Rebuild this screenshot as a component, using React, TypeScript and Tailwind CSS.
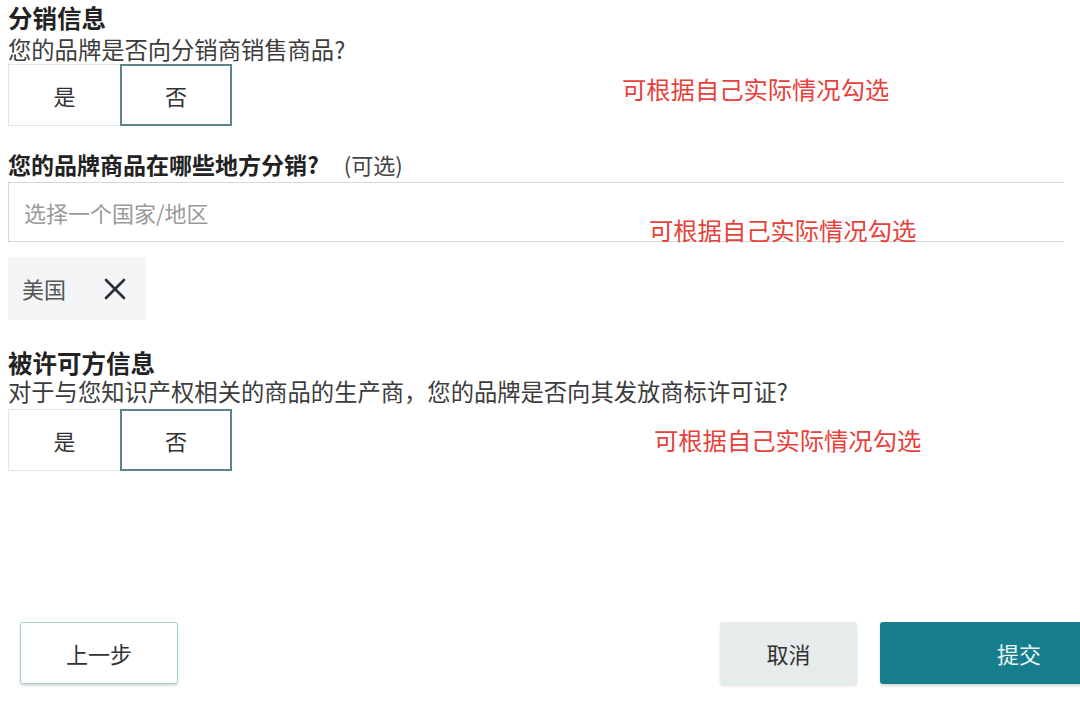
import React, { useState } from 'react';

const Note: React.FC<{ className?: string }> = ({ className = '' }) => (
  <span className={`text-[24.3px] leading-[24px] text-[#e8403a] whitespace-nowrap ${className}`}>
    可根据自己实际情况勾选
  </span>
);

const YesNo: React.FC<{ value: boolean; onChange: (v: boolean) => void }> = ({ value, onChange }) => (
  <div className="flex h-[62px] shrink-0">
    <button
      type="button"
      onClick={() => onChange(true)}
      className={`w-[112px] h-full text-[22px] text-[#333] ${
        value ? 'border-2 border-[#5b858a]' : 'border border-r-0 border-[#e3e3e3]'
      }`}
    >
      是
    </button>
    <button
      type="button"
      onClick={() => onChange(false)}
      className={`w-[112px] h-full text-[22px] text-[#333] ${
        !value ? 'border-2 border-[#5b858a]' : 'border border-l-0 border-[#e3e3e3]'
      }`}
    >
      否
    </button>
  </div>
);

const App: React.FC = () => {
  const [distributes, setDistributes] = useState(false);
  const [licenses, setLicenses] = useState(false);
  const [regions, setRegions] = useState<string[]>(['美国']);

  return (
    <div
      className="w-[1080px] h-[709px] overflow-hidden bg-white flex flex-col"
      style={{ fontFamily: '"Noto Sans CJK SC", "Noto Sans", sans-serif' }}
    >
      <div className="pl-[8px] pt-[3px] flex flex-col">
        {/* 分销信息 */}
        <h2 className="text-[24.5px] leading-[30px] font-bold text-[#222]">分销信息</h2>
        <p className="mt-[1px] text-[23.3px] leading-[30px] text-[#3c3c3c]">您的品牌是否向分销商销售商品?</p>
        <div className="flex">
          <YesNo value={distributes} onChange={setDistributes} />
          <Note className="ml-[390px] mt-[13px]" />
        </div>

        <div className="mt-[22px] flex items-baseline">
          <h3 className="text-[23px] leading-[30px] font-bold text-[#222]">您的品牌商品在哪些地方分销?</h3>
          <span className="ml-[25px] text-[22px] text-[#444]">(可选)</span>
        </div>
        <div className="relative mt-[1px] w-[1056px] h-[60px] border-y border-l border-[#d6d6d6] flex items-center pl-[15px]">
          <input
            type="text"
            placeholder="选择一个国家/地区"
            className="w-full bg-transparent text-[22px] text-[#333] placeholder:text-[#9a9a9a] focus:outline-none"
          />
          <Note className="absolute left-[640px] top-[35px]" />
        </div>

        <div className="mt-[15px] flex">
          {regions.map((r) => (
            <div key={r} className="h-[63px] w-[138px] bg-[#f3f5f6] flex items-center pl-[14px]">
              <span className="text-[22px] text-[#555]">{r}</span>
              <button
                type="button"
                onClick={() => setRegions(regions.filter((x) => x !== r))}
                className="ml-[38px] text-[#2b2f33]"
              >
                <svg width="22" height="22" viewBox="0 0 22 22" fill="none" stroke="currentColor" strokeWidth="2.6" strokeLinecap="round">
                  <path d="M2 2 20 20M20 2 2 20" />
                </svg>
              </button>
            </div>
          ))}
        </div>

        {/* 被许可方信息 */}
        <h2 className="mt-[28px] text-[24.5px] leading-[29px] font-bold text-[#222]">被许可方信息</h2>
        <p className="text-[23.3px] leading-[29px] text-[#3c3c3c]">
          对于与您知识产权相关的商品的生产商，您的品牌是否向其发放商标许可证?
        </p>
        <div className="mt-[3px] flex items-center">
          <YesNo value={licenses} onChange={setLicenses} />
          <Note className="ml-[422px]" />
        </div>
      </div>

      <div className="mt-auto mb-[25px] w-[1158px] flex pl-[20px]">
        <button
          type="button"
          className="w-[158px] h-[62px] rounded-[3px] border-[1.5px] border-[#a3cfcf] bg-white text-[22px] text-[#333] shadow-[0_2px_3px_rgba(0,0,0,0.15)]"
        >
          上一步
        </button>
        <div className="flex-1" />
        <button
          type="button"
          className="w-[137px] h-[62px] rounded-[3px] bg-[#e6ebec] text-[22px] text-[#333] shadow-[0_2px_3px_rgba(0,0,0,0.12)]"
        >
          取消
        </button>
        <button
          type="button"
          className="ml-[23px] w-[278px] shrink-0 h-[62px] rounded-[3px] bg-[#167e8c] text-[22px] text-[#eef7f8] shadow-[0_2px_3px_rgba(0,0,0,0.15)]"
        >
          提交
        </button>
      </div>
    </div>
  );
};

export default App;
